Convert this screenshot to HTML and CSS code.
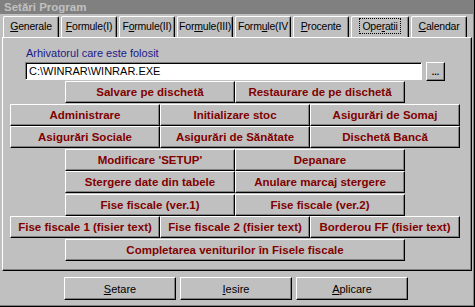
FILE: index.html
```html
<!DOCTYPE html>
<html>

<head>
    <title>Setări Program</title>
    <link rel="stylesheet" href="styles.css">
</head>

<body>
    <div class="window">
        <div class="titlebar">Setări Program</div>

        <div class="tabs">
            <div class="tab"><u>G</u>enerale</div>
            <div class="tab"><u>F</u>ormule(I)</div>
            <div class="tab">F<u>o</u>rmule(II)</div>
            <div class="tab">For<u>m</u>ule(III)</div>
            <div class="tab tab-left">Form<u>u</u>le(IV</div>
            <div class="tab"><u>P</u>rocente</div>
            <div class="tab tab-active"><span class="focus">Ope<u>r</u>atii</span></div>
            <div class="tab"><u>C</u>alendar</div>
        </div>

        <div class="panel">
            <div class="path-label">Arhivatorul care este folosit</div>
            <div class="path-row">
                <div class="path-input">C:\WINRAR\WINRAR.EXE</div>
                <button class="btn browse-btn">...</button>
            </div>

            <div class="op-grid">
                <div class="op-row">
                    <button class="btn op-btn w2">Salvare pe dischetă</button>
                    <button class="btn op-btn w2">Restaurare de pe dischetă</button>
                </div>
                <div class="op-row">
                    <button class="btn op-btn w3">Administrare</button>
                    <button class="btn op-btn w3">Initializare stoc</button>
                    <button class="btn op-btn w3">Asigurări de Somaj</button>
                </div>
                <div class="op-row">
                    <button class="btn op-btn w3">Asigurări Sociale</button>
                    <button class="btn op-btn w3">Asigurări de Sănătate</button>
                    <button class="btn op-btn w3">Dischetă Bancă</button>
                </div>
                <div class="op-row">
                    <button class="btn op-btn w2">Modificare 'SETUP'</button>
                    <button class="btn op-btn w2">Depanare</button>
                </div>
                <div class="op-row">
                    <button class="btn op-btn w2">Stergere date din tabele</button>
                    <button class="btn op-btn w2">Anulare marcaj stergere</button>
                </div>
                <div class="op-row">
                    <button class="btn op-btn w2">Fise fiscale (ver.1)</button>
                    <button class="btn op-btn w2">Fise fiscale (ver.2)</button>
                </div>
                <div class="op-row">
                    <button class="btn op-btn w3">Fise fiscale 1 (fisier text)</button>
                    <button class="btn op-btn w3">Fise fiscale 2 (fisier text)</button>
                    <button class="btn op-btn w3">Borderou FF (fisier text)</button>
                </div>
                <div class="op-row">
                    <button class="btn op-btn w1">Completarea veniturilor în Fisele fiscale</button>
                </div>
            </div>
        </div>

        <div class="dialog-buttons">
            <button class="btn dlg-btn"><u>S</u>etare</button>
            <button class="btn dlg-btn"><u>I</u>esire</button>
            <button class="btn dlg-btn"><u>A</u>plicare</button>
        </div>
    </div>
</body>

</html>
```

FILE: styles.css
```css
body {
    margin: 0;
    padding: 0;
    background-color: #c0c0c0;
    font-family: "Liberation Sans", Arial, sans-serif;
    font-size: 11px;
    color: #000;
}

.window {
    width: 475px;
    height: 307px;
    box-sizing: border-box;
    border-right: 1px solid #000;
    border-bottom: 1px solid #000;
    box-shadow: inset -1px -1px #808080;
    overflow: hidden;
}

.titlebar {
    height: 14px;
    line-height: 14px;
    padding-left: 4px;
    background-color: #808080;
    color: #c0c0c0;
    font-weight: bold;
    font-size: 11.5px;
}

.tabs {
    display: flex;
    gap: 2px;
    margin: 2px 0 0 3px;
    height: 21px;
}

.tab {
    width: 56px;
    box-sizing: border-box;
    border-top: 1px solid #fff;
    border-left: 1px solid #fff;
    border-right: 1px solid #000;
    box-shadow: inset -1px 0 #808080;
    border-radius: 2px 2px 0 0;
    text-align: center;
    font-size: 10.5px;
    letter-spacing: -0.2px;
    line-height: 19px;
    white-space: nowrap;
    overflow: hidden;
}

.tab-left {
    text-align: left;
    padding-left: 2px;
}

.tab-active {
    width: 58px;
}

.focus {
    outline: 1px dotted #000;
    outline-offset: 1px;
    padding: 0 1px;
}

.panel {
    margin-left: 2px;
    width: 470px;
    height: 234px;
    box-sizing: border-box;
    border-top: 1px solid #fff;
    border-left: 1px solid #fff;
    border-right: 1px solid #000;
    border-bottom: 1px solid #000;
    box-shadow: inset -1px -1px #808080;
    padding: 9px 0 0 7px;
}

.path-label {
    margin-left: 16px;
    line-height: 13px;
    color: #1a1a8a;
}

.path-row {
    display: flex;
    gap: 4px;
    margin: 2px 0 0 15px;
    height: 19px;
}

.path-input {
    width: 397px;
    height: 18px;
    box-sizing: border-box;
    background-color: #fff;
    border-top: 1px solid #808080;
    border-left: 1px solid #808080;
    border-right: 1px solid #fff;
    border-bottom: 1px solid #fff;
    box-shadow: inset 1px 1px #000;
    padding-left: 3px;
    line-height: 16px;
    white-space: nowrap;
}

.btn {
    font-family: inherit;
    background-color: #c0c0c0;
    box-sizing: border-box;
    border-top: 1px solid #fff;
    border-left: 1px solid #fff;
    border-right: 1px solid #000;
    border-bottom: 1px solid #000;
    box-shadow: inset -1px -1px #808080;
    border-radius: 0;
    padding: 0;
    margin: 0;
    color: #000;
    font-size: 11px;
    white-space: nowrap;
}

.browse-btn {
    width: 19px;
    height: 19px;
    font-weight: bold;
    font-size: 9px;
    line-height: 12px;
}

.op-grid {
    width: 450px;
    display: flex;
    flex-direction: column;
    align-items: center;
    gap: 0.5px;
}

.op-row {
    display: flex;
    height: 22px;
}

.op-btn {
    height: 22px;
    font-weight: bold;
    font-size: 11.5px;
    color: #800000;
}

.w1 {
    width: 340px;
}

.w2 {
    width: 170px;
}

.w3 {
    width: 150px;
}

.dialog-buttons {
    display: flex;
    gap: 4px;
    margin: 6px 0 0 64px;
}

.dlg-btn {
    width: 112px;
    height: 23px;
}
```
